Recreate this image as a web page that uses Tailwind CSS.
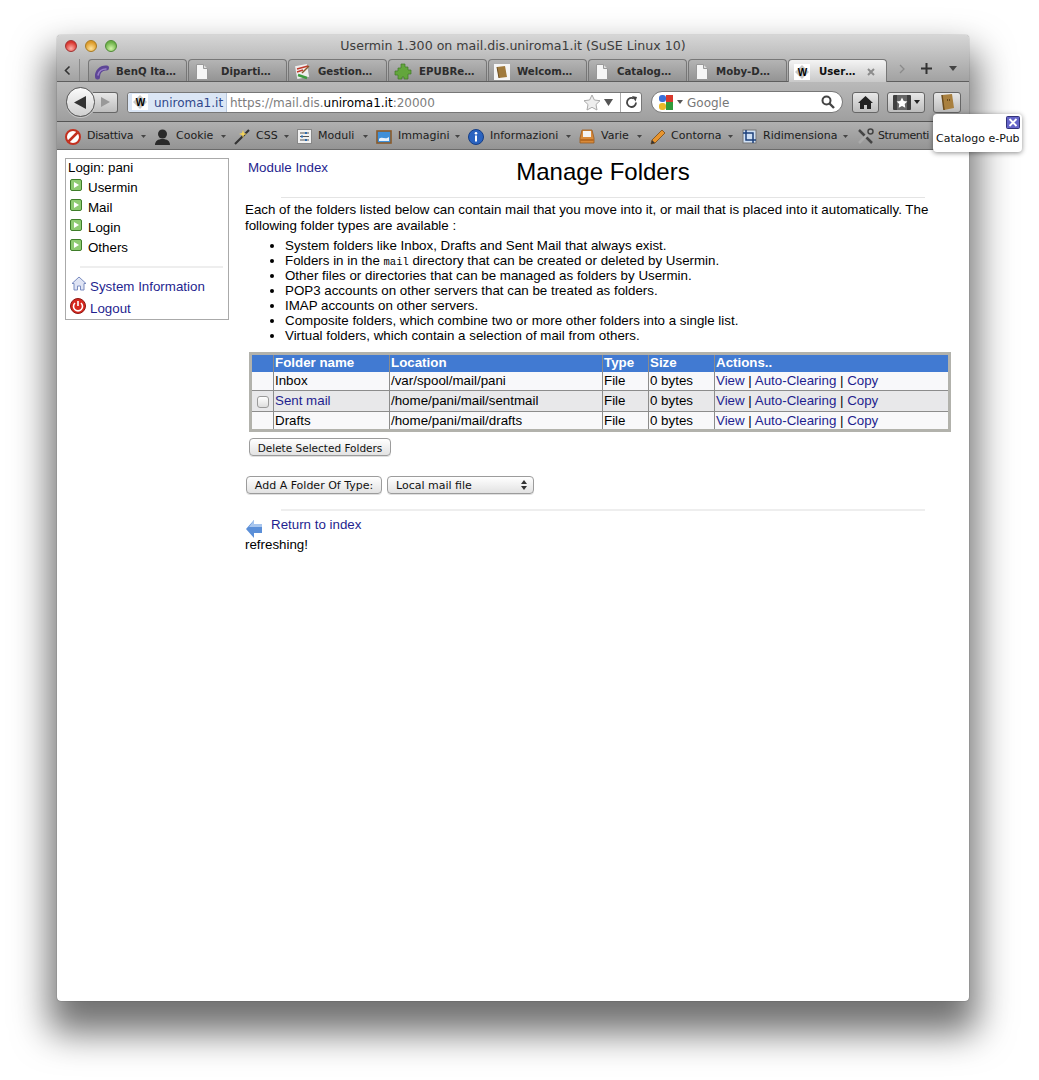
<!DOCTYPE html>
<html lang="en">
<head>
<meta charset="UTF-8" />
<title>Usermin 1.300 on mail.dis.uniroma1.it</title>
<script src="https://cdn.jsdelivr.net/npm/@tailwindcss/browser@4"></script>
</head>
<body class="bg-white w-[1039px] h-[1080px] overflow-hidden pl-[57px] pt-[35px] font-['Liberation_Sans',Arial,sans-serif]">

<!-- Browser window -->
<div class="relative w-[912px] h-[966px] rounded-[4px] bg-white flex flex-col shadow-[0_24px_36px_8px_rgba(0,0,0,0.56),0_0_1px_rgba(0,0,0,0.7)]">

  <!-- Title + tab strip -->
  <div class="h-[47px] shrink-0 rounded-t-[4px] bg-gradient-to-b from-[#d6d6d6] to-[#a2a2a2] border-b border-[#5e5e5e] flex flex-col font-['DejaVu_Sans',sans-serif]">
    <div class="relative h-[24px] shrink-0 flex items-start justify-center text-[12.600px] text-[#3c3c3c]">
      <div class="absolute left-[8px] top-[5px] flex gap-[8px]">
        <span class="w-[12px] h-[12px] rounded-full border border-[#a03030] bg-[radial-gradient(circle_at_50%_75%,#ffb0a8,#d8352e_70%)]"></span>
        <span class="w-[12px] h-[12px] rounded-full border border-[#a87a20] bg-[radial-gradient(circle_at_50%_75%,#ffe39a,#dc9a2a_70%)]"></span>
        <span class="w-[12px] h-[12px] rounded-full border border-[#4f8a35] bg-[radial-gradient(circle_at_50%_75%,#d2f5a8,#6cb048_70%)]"></span>
      </div>
      <span class="pt-[2px]">Usermin 1.300 on mail.dis.uniroma1.it (SuSE Linux 10)</span>
    </div>
    <div class="flex h-[22px] items-end text-[10.200px] font-bold text-[#2c2c2c]">
      <div class="w-[31px] h-[22px] shrink-0 flex items-center">
        <svg class="ml-[7px] mr-[8px]" width="7" height="11" viewBox="0 0 7 11"><path d="M5.500 1.500 1.500 5.500l4 4" fill="none" stroke="#333" stroke-width="1.600"/></svg>
        <span class="w-[1px] h-[22px] bg-[#8a8a8a]"></span>
      </div>
      <!-- tab: BenQ -->
      <div class="w-[99px] h-[22px] mr-[1px] pt-[2px] shrink-0 flex items-center rounded-t-[4px] border border-b-0 border-[#777] bg-gradient-to-b from-[#b4b4b4] to-[#949494]">
        <svg class="ml-[5px] mr-[6px]" width="16" height="16" viewBox="0 0 16 16"><path d="M3.500 13C3 8 7 3.500 12.500 4" fill="none" stroke="#5d4596" stroke-width="5" stroke-linecap="round"/><path d="M4 11C5 7 8 5 12 5" fill="none" stroke="#9a80c8" stroke-width="1.500" stroke-linecap="round"/></svg>
        <span>BenQ Ita…</span>
      </div>
      <!-- tab: Dipartimento -->
      <div class="w-[99px] h-[22px] mr-[1px] pt-[2px] shrink-0 flex items-center rounded-t-[4px] border border-b-0 border-[#777] bg-gradient-to-b from-[#b4b4b4] to-[#949494]">
        <svg class="ml-[7px] mr-[13px]" width="12" height="16" viewBox="0 0 12 16"><path d="M.5.5h7l4 4v11H.5z" fill="#f6f6f6" stroke="#999"/><path d="M7.500.5v4h4" fill="#ddd" stroke="#999"/></svg>
        <span>Diparti…</span>
      </div>
      <!-- tab: Gestione -->
      <div class="w-[99px] h-[22px] mr-[1px] pt-[2px] shrink-0 flex items-center rounded-t-[4px] border border-b-0 border-[#777] bg-gradient-to-b from-[#b4b4b4] to-[#949494]">
        <svg class="ml-[5px] mr-[7px]" width="17" height="17" viewBox="0 0 17 17"><rect x="2" y="2" width="12" height="13" fill="#eee" transform="rotate(-10 8 8)"/><path d="M3 6l11-3M3 9l6-2" stroke="#c0392b" stroke-width="1.500"/><path d="M4 12l9 3" stroke="#3f9b3f" stroke-width="2.500"/><path d="M8 10l7-7" stroke="#8a5a2a" stroke-width="1.500"/></svg>
        <span>Gestion…</span>
      </div>
      <!-- tab: EPUBReader -->
      <div class="w-[99px] h-[22px] mr-[1px] pt-[2px] shrink-0 flex items-center rounded-t-[4px] border border-b-0 border-[#777] bg-gradient-to-b from-[#b4b4b4] to-[#949494]">
        <svg class="ml-[5px] mr-[7px]" width="18" height="17" viewBox="0 0 18 17"><path d="M7 1h4v3h3v3h3v4h-3v5h-4v-2H8v2H4v-4H1V8h3V5h3z" fill="#63a63c" stroke="#3f7a25" stroke-width=".7"/></svg>
        <span>EPUBRe…</span>
      </div>
      <!-- tab: Welcome -->
      <div class="w-[99px] h-[22px] mr-[1px] pt-[2px] shrink-0 flex items-center rounded-t-[4px] border border-b-0 border-[#777] bg-gradient-to-b from-[#b4b4b4] to-[#949494]">
        <svg class="ml-[5px] mr-[7px]" width="16" height="16" viewBox="0 0 16 16"><rect width="16" height="16" fill="#f5f5f5"/><path d="M3 3l8-1 2 11-8 1z" fill="#a07a3c"/><path d="M3 3l2 11" stroke="#6a4c20"/></svg>
        <span>Welcom…</span>
      </div>
      <!-- tab: Catalogo -->
      <div class="w-[99px] h-[22px] mr-[1px] pt-[2px] shrink-0 flex items-center rounded-t-[4px] border border-b-0 border-[#777] bg-gradient-to-b from-[#b4b4b4] to-[#949494]">
        <svg class="ml-[7px] mr-[9px]" width="12" height="16" viewBox="0 0 12 16"><path d="M.5.5h7l4 4v11H.5z" fill="#f6f6f6" stroke="#999"/><path d="M7.500.5v4h4" fill="#ddd" stroke="#999"/></svg>
        <span>Catalog…</span>
      </div>
      <!-- tab: Moby-Dick -->
      <div class="w-[99px] h-[22px] mr-[1px] pt-[2px] shrink-0 flex items-center rounded-t-[4px] border border-b-0 border-[#777] bg-gradient-to-b from-[#b4b4b4] to-[#949494]">
        <svg class="ml-[7px] mr-[8px]" width="12" height="16" viewBox="0 0 12 16"><path d="M.5.5h7l4 4v11H.5z" fill="#f6f6f6" stroke="#999"/><path d="M7.500.5v4h4" fill="#ddd" stroke="#999"/></svg>
        <span>Moby-D…</span>
      </div>
      <!-- tab: active -->
      <div class="relative z-10 w-[99px] h-[23px] -mb-[1px] pt-[2px] shrink-0 flex items-center rounded-t-[4px] border border-b-0 border-[#777] bg-gradient-to-b from-[#f4f4f4] to-[#c9c9c9] text-[#111]">
        <span class="relative ml-[5px] mr-[9px] w-[16px] h-[16px] shrink-0 flex items-center justify-center bg-white text-[10px] font-bold tracking-[-1px] text-black font-['Liberation_Sans',sans-serif]">
          <svg class="absolute inset-0" width="16" height="16" viewBox="0 0 16 16"><path d="M8 1l7 7-7 7-7-7z" fill="#c8c8c8"/></svg>
          <span class="relative">W</span>
        </span>
        <span>User…</span>
        <svg class="ml-[12px]" width="8" height="8" viewBox="0 0 8 8"><path d="M1 1l6 6M7 1 1 7" stroke="#8c8c8c" stroke-width="2"/></svg>
      </div>
      <div class="flex-1 h-[22px] relative">
        <svg class="absolute left-[12px] top-[5px]" width="6" height="10" viewBox="0 0 6 10"><path d="M1 1l4 4-4 4" fill="none" stroke="#8a8a8a" stroke-width="1.300"/></svg>
        <svg class="absolute left-[34px] top-[4px]" width="11" height="11" viewBox="0 0 11 11"><path d="M5.500 0v11M0 5.500h11" stroke="#333" stroke-width="2"/></svg>
        <svg class="absolute left-[62px] top-[7px]" width="8" height="5" viewBox="0 0 8 5"><path d="M0 0h8L4 5z" fill="#444"/></svg>
      </div>
    </div>
  </div>

  <!-- Navigation toolbar -->
  <div class="relative h-[40px] shrink-0 bg-gradient-to-b from-[#b9b9b9] to-[#9f9f9f] border-b border-[#555] font-['DejaVu_Sans',sans-serif]">
    <div class="flex items-center h-full pl-[9px] pt-[1px]">
      <!-- back / forward -->
      <div class="relative z-10 w-[29px] h-[30px] shrink-0 rounded-full border border-[#555] bg-gradient-to-b from-[#fbfbfb] to-[#cfcfcf] flex items-center justify-center shadow-[0_1px_0_rgba(255,255,255,0.4)]">
        <svg width="13" height="13" viewBox="0 0 13 13"><path d="M12 0v13L0 6.500z" fill="#333"/></svg>
      </div>
      <div class="w-[25px] h-[21px] -ml-[2px] shrink-0 rounded-r-[3px] border border-[#666] border-l-0 bg-gradient-to-b from-[#e8e8e8] to-[#bdbdbd] flex items-center justify-center">
        <svg width="9" height="10" viewBox="0 0 9 10"><path d="M0 0v10l9-5z" fill="#999"/></svg>
      </div>
      <!-- url bar -->
      <div class="ml-[9px] w-[515px] h-[21px] shrink-0 flex items-center bg-white rounded-[3px] border border-[#777] text-[12px]">
        <div class="h-full w-[99px] flex items-center bg-[#dbe6f5] border-r border-[#b8c8de] rounded-l-[3px] text-[#30478a]">
          <span class="relative ml-[4px] mr-[6px] w-[16px] h-[16px] shrink-0 flex items-center justify-center bg-white text-[10px] font-bold tracking-[-1px] text-black font-['Liberation_Sans',sans-serif]">
            <svg class="absolute inset-0" width="16" height="16" viewBox="0 0 16 16"><path d="M8 1l7 7-7 7-7-7z" fill="#c8c8c8"/></svg>
            <span class="relative">W</span>
          </span>
          <span class="pt-[2px]">uniroma1.it</span>
        </div>
        <span class="ml-[3px] pt-[2px] text-[#7d7d7d]">https://mail.dis.<span class="text-black">uniroma1.it</span>:20000</span>
        <svg class="ml-auto" width="18" height="17" viewBox="0 0 18 17"><path d="M9 1l2.400 5 5.600.7-4 3.800 1 5.500L9 13.300 4 16l1-5.500L1 6.700 6.600 6z" fill="#eee" stroke="#aaa"/></svg>
        <svg class="ml-[3px] mr-[7px]" width="9" height="7" viewBox="0 0 9 7"><path d="M0 0h9L4.500 7z" fill="#555"/></svg>
        <div class="h-full w-[21px] border-l border-[#aaa] flex items-center justify-center">
          <svg width="13" height="13" viewBox="0 0 13 13"><path d="M11 6.500A4.500 4.500 0 1 1 8.800 2.600" fill="none" stroke="#444" stroke-width="1.800"/><path d="M7 0l5 1-1.500 4.500z" fill="#444"/></svg>
        </div>
      </div>
      <!-- search -->
      <div class="ml-[9px] w-[192px] h-[22px] shrink-0 flex items-center bg-white rounded-full border border-[#777] text-[12px] text-[#777]">
        <svg class="ml-[6px]" width="17" height="17" viewBox="0 0 17 17"><rect x="1" y="1" width="7" height="7" rx="3" fill="#3a6fd8"/><rect x="8" y="1" width="7" height="7" fill="#d8382c"/><rect x="8" y="8" width="7" height="8" fill="#2f9a3a"/><rect x="1" y="9" width="7" height="7" rx="3" fill="#eab92a"/></svg>
        <svg class="ml-[2px] mr-[4px]" width="6" height="4" viewBox="0 0 6 4"><path d="M0 0h6L3 4z" fill="#555"/></svg>
        <span class="pt-[2px]">Google</span>
        <svg class="ml-auto mr-[7px]" width="14" height="14" viewBox="0 0 14 14"><circle cx="5.500" cy="5.500" r="4" fill="none" stroke="#444" stroke-width="2"/><path d="M8.500 8.500 13 13" stroke="#444" stroke-width="2.400"/></svg>
      </div>
      <!-- right buttons -->
      <div class="ml-[9px] w-[27px] h-[21px] shrink-0 flex items-center justify-center rounded-[3px] border border-[#666] bg-gradient-to-b from-[#e8e8e8] to-[#bdbdbd]">
        <svg width="15" height="13" viewBox="0 0 15 13"><path d="M7.500 0 15 7h-2v6H9V9H6v4H2V7H0z" fill="#222"/></svg>
      </div>
      <div class="ml-[8px] w-[38px] h-[21px] shrink-0 flex items-center justify-center gap-[3px] rounded-[3px] border border-[#666] bg-gradient-to-b from-[#e8e8e8] to-[#bdbdbd]">
        <svg width="18" height="15" viewBox="0 0 18 15"><rect width="18" height="15" rx="1" fill="#3e3e3e"/><rect x="4" width="10" height="15" fill="#666"/><path d="M9 2.500l1.700 3.400 3.700.5-2.700 2.600.6 3.700L9 11l-3.300 1.700.6-3.700-2.700-2.600 3.700-.5z" fill="#fff"/></svg>
        <svg width="6" height="4" viewBox="0 0 6 4"><path d="M0 0h6L3 4z" fill="#222"/></svg>
      </div>
      <div class="ml-[8px] w-[28px] h-[21px] shrink-0 flex items-center justify-center rounded-[3px] border border-[#666] bg-gradient-to-b from-[#e8e8e8] to-[#bdbdbd]">
        <svg width="14" height="16" viewBox="0 0 14 16"><path d="M2 1l10-1 2 14-10 2z" fill="#a9803f"/><path d="M2 1l2 15" stroke="#6b4b1c" stroke-width="1.500"/><path d="M7 5h1v2H7zm2 0h1v2H9z" fill="#6b4b1c"/></svg>
      </div>
    </div>
  </div>

  <!-- Bookmarks toolbar -->
  <div class="h-[28px] shrink-0 bg-gradient-to-b from-[#b0b0b0] to-[#949494] border-b border-[#6a6a6a] flex items-center pl-[8px] pt-[2px] text-[11px] text-[#1c1c1c] font-['DejaVu_Sans',sans-serif] whitespace-nowrap">
    <svg class="mr-[6px] shrink-0" width="16" height="16" viewBox="0 0 16 16"><circle cx="8" cy="8" r="7" fill="#fff" stroke="#c3301f" stroke-width="2"/><path d="M3.500 12.500l9-9" stroke="#c3301f" stroke-width="2.500"/></svg>
    <span class="w-[46px] shrink-0 tracking-[-0.3px]">Disattiva</span>
    <svg class="ml-[8px] mr-[8px] shrink-0" width="5" height="3" viewBox="0 0 5 3"><path d="M0 0h5L2.500 3z" fill="#444"/></svg>
    <svg class="mr-[5px] shrink-0" width="17" height="16" viewBox="0 0 17 16"><circle cx="8.500" cy="5" r="4.500" fill="#2a2a2a"/><path d="M1 16c0-4 3-6 7.500-6s7.500 2 7.500 6z" fill="#2a2a2a"/></svg>
    <span class="w-[37px] shrink-0">Cookie</span>
    <svg class="ml-[8px] mr-[8px] shrink-0" width="5" height="3" viewBox="0 0 5 3"><path d="M0 0h5L2.500 3z" fill="#444"/></svg>
    <svg class="mr-[5px] shrink-0" width="17" height="17" viewBox="0 0 17 17"><path d="M1 16 15 2" stroke="#333" stroke-width="2.200"/><path d="M8 5l1-3 1 3 3 1-3 1-1 3-1-3-3-1z" fill="#f3d35a"/></svg>
    <span class="w-[20px] shrink-0">CSS</span>
    <svg class="ml-[8px] mr-[8px] shrink-0" width="5" height="3" viewBox="0 0 5 3"><path d="M0 0h5L2.500 3z" fill="#444"/></svg>
    <svg class="mr-[6px] shrink-0" width="15" height="15" viewBox="0 0 15 15"><rect x=".5" y=".5" width="14" height="14" fill="#f2f2f2" stroke="#888"/><path d="M3 4h9M3 7.500h9M3 11h9" stroke="#555"/><path d="M9 3v2M5 6.500v2M9 10v2" stroke="#2d6cb0" stroke-width="2"/></svg>
    <span class="w-[37px] shrink-0">Moduli</span>
    <svg class="ml-[8px] mr-[8px] shrink-0" width="5" height="3" viewBox="0 0 5 3"><path d="M0 0h5L2.500 3z" fill="#444"/></svg>
    <svg class="mr-[6px] shrink-0" width="16" height="14" viewBox="0 0 16 14"><rect x="1" y="1" width="14" height="12" fill="#3f8fd8" stroke="#8a5a2a" stroke-width="1.600"/><path d="M3 9c3-3 6 1 10-2v4H3z" fill="#e8f2fb"/></svg>
    <span class="w-[49px] shrink-0">Immagini</span>
    <svg class="ml-[8px] mr-[8px] shrink-0" width="5" height="3" viewBox="0 0 5 3"><path d="M0 0h5L2.500 3z" fill="#444"/></svg>
    <svg class="mr-[6px] shrink-0" width="16" height="16" viewBox="0 0 16 16"><circle cx="8" cy="8" r="7.500" fill="#2a63c0" stroke="#173f86"/><circle cx="8" cy="4.300" r="1.300" fill="#fff"/><rect x="7" y="6.500" width="2" height="6" fill="#fff"/></svg>
    <span class="w-[68px] shrink-0">Informazioni</span>
    <svg class="ml-[8px] mr-[8px] shrink-0" width="5" height="3" viewBox="0 0 5 3"><path d="M0 0h5L2.500 3z" fill="#444"/></svg>
    <svg class="mr-[6px] shrink-0" width="16" height="15" viewBox="0 0 16 15"><path d="M3 1h10l2 8v5H1V9z" fill="#d88a3a" stroke="#9a5a20" stroke-width=".8"/><rect x="4" y="2" width="8" height="6" fill="#f3f3f3"/><rect x="1" y="10" width="14" height="2" fill="#b86a20"/></svg>
    <span class="w-[28px] shrink-0">Varie</span>
    <svg class="ml-[8px] mr-[8px] shrink-0" width="5" height="3" viewBox="0 0 5 3"><path d="M0 0h5L2.500 3z" fill="#444"/></svg>
    <svg class="mr-[5px] shrink-0" width="16" height="16" viewBox="0 0 16 16"><path d="M1 15l1-4L12 1l3 3L5 14z" fill="#e8952f" stroke="#7a4a14" stroke-width=".8"/><path d="M1 15l1-4 3 3z" fill="#333"/></svg>
    <span class="w-[49px] shrink-0">Contorna</span>
    <svg class="ml-[8px] mr-[9px] shrink-0" width="5" height="3" viewBox="0 0 5 3"><path d="M0 0h5L2.500 3z" fill="#444"/></svg>
    <svg class="mr-[6px] shrink-0" width="15" height="15" viewBox="0 0 15 15"><rect x="1" y="1" width="13" height="13" fill="#cfe0f5" stroke="#777"/><path d="M4 1v10h10M1 4h10v10" fill="none" stroke="#1d3f7a" stroke-width="1.500"/></svg>
    <span class="w-[72px] shrink-0">Ridimensiona</span>
    <svg class="ml-[8px] mr-[9px] shrink-0" width="5" height="3" viewBox="0 0 5 3"><path d="M0 0h5L2.500 3z" fill="#444"/></svg>
    <svg class="mr-[4px] shrink-0" width="17" height="17" viewBox="0 0 17 17"><path d="M2 2l13 13" stroke="#444" stroke-width="2.500"/><path d="M15 2 2 15" stroke="#aaa" stroke-width="2.500"/><circle cx="13.500" cy="3.500" r="2.500" fill="none" stroke="#444" stroke-width="1.500"/></svg>
    <span class="tracking-[-0.4px]">Strumenti</span>
  </div>

  <!-- Page content -->
  <div class="flex-1 flex items-start pl-[8px] pt-[8px] text-[13.330px] leading-[15px] text-black">

    <!-- Left menu -->
    <div class="w-[164px] h-[162px] shrink-0 border border-[#aaa] pl-[2px]">
      <div class="pt-[1px] h-[18px]">Login: pani</div>
      <div class="flex flex-col">
        <div class="h-[20px] flex items-center"><svg class="ml-[2px] mr-[6px] -mt-[4px]" width="12" height="12" viewBox="0 0 12 12"><rect x=".5" y=".5" width="11" height="11" rx="1.500" fill="#8ecb72" stroke="#3e7d2a"/><path d="M4 3v6l5-3z" fill="#fff"/></svg>Usermin</div>
        <div class="h-[20px] flex items-center"><svg class="ml-[2px] mr-[6px] -mt-[4px]" width="12" height="12" viewBox="0 0 12 12"><rect x=".5" y=".5" width="11" height="11" rx="1.500" fill="#8ecb72" stroke="#3e7d2a"/><path d="M4 3v6l5-3z" fill="#fff"/></svg>Mail</div>
        <div class="h-[20px] flex items-center"><svg class="ml-[2px] mr-[6px] -mt-[4px]" width="12" height="12" viewBox="0 0 12 12"><rect x=".5" y=".5" width="11" height="11" rx="1.500" fill="#8ecb72" stroke="#3e7d2a"/><path d="M4 3v6l5-3z" fill="#fff"/></svg>Login</div>
        <div class="h-[20px] flex items-center"><svg class="ml-[2px] mr-[6px] -mt-[4px]" width="12" height="12" viewBox="0 0 12 12"><rect x=".5" y=".5" width="11" height="11" rx="1.500" fill="#8ecb72" stroke="#3e7d2a"/><path d="M4 3v6l5-3z" fill="#fff"/></svg>Others</div>
      </div>
      <div class="h-[2px] ml-[12px] mr-[5px] mt-[9px] bg-[#eeeeee]"></div>
      <div class="h-[22px] mt-[7px] flex items-center text-[#1f1f8f]"><svg class="ml-[3px] mr-[3px] -mt-[5px]" width="16" height="15" viewBox="0 0 16 15"><path d="M8 1 1 7.500h2V14h3.500v-4h3v4H13V7.500h2z" fill="#dfe4f4" stroke="#7a8cc0"/></svg>System Information</div>
      <div class="h-[22px] flex items-center text-[#1f1f8f]"><svg class="ml-[2px] mr-[4px] -mt-[5px]" width="16" height="16" viewBox="0 0 16 16"><circle cx="8" cy="8" r="7.500" fill="#d6281f" stroke="#8e1712"/><path d="M5 5a4.500 4.500 0 1 0 6 0" fill="none" stroke="#fff" stroke-width="1.600"/><path d="M8 3v5" stroke="#fff" stroke-width="1.600"/></svg>Logout</div>
    </div>

    <!-- Main column -->
    <div class="ml-[16px] w-[708px] shrink-0">
      <div class="relative h-[40px] flex justify-center">
        <a class="absolute left-[3px] top-[2px] text-[#1f1f8f]">Module Index</a>
        <h1 class="text-[24px] leading-[28px] text-black pl-[8px]">Manage Folders</h1>
      </div>
      <div class="h-[1px] mt-[-1px] ml-[36px] mr-[28px] bg-[#e4e4e4]"></div>
      <p class="mt-[4px] leading-[16px] w-[700px]">Each of the folders listed below can contain mail that you move into it, or mail that is placed into it automatically. The following folder types are available :</p>
      <ul class="mt-[4px] pl-[40px] list-disc">
        <li>System folders like Inbox, Drafts and Sent Mail that always exist.</li>
        <li>Folders in in the <code class="font-['Liberation_Mono',monospace] text-[10.500px] leading-[0]">mail</code> directory that can be created or deleted by Usermin.</li>
        <li>Other files or directories that can be managed as folders by Usermin.</li>
        <li>POP3 accounts on other servers that can be treated as folders.</li>
        <li>IMAP accounts on other servers.</li>
        <li>Composite folders, which combine two or more other folders into a single list.</li>
        <li>Virtual folders, which contain a selection of mail from others.</li>
      </ul>

      <!-- Folder table -->
      <table class="mt-[9px] ml-[4px] w-[702px] table-fixed border-collapse border-[3px] border-[#b2b2ac]">
        <colgroup><col class="w-[23px]" /><col class="w-[116px]" /><col class="w-[213px]" /><col class="w-[46px]" /><col class="w-[66px]" /><col /></colgroup>
        <thead>
          <tr class="h-[18px] bg-[#417ad2] text-white font-bold text-left">
            <th class="p-0 border-r border-[#8c8c8c]"></th>
            <th class="p-0 pl-[1px] border-r border-[#8c8c8c]"><span class="relative -top-[1px]">Folder name</span></th>
            <th class="p-0 pl-[1px] border-r border-[#8c8c8c]"><span class="relative -top-[1px]">Location</span></th>
            <th class="p-0 pl-[1px] border-r border-[#8c8c8c]"><span class="relative -top-[1px]">Type</span></th>
            <th class="p-0 pl-[1px] border-r border-[#8c8c8c]"><span class="relative -top-[1px]">Size</span></th>
            <th class="p-0 pl-[1px]"><span class="relative -top-[1px]">Actions..</span></th>
          </tr>
        </thead>
        <tbody>
          <tr class="h-[19px] bg-[#f8f8fa] border-b border-[#8c8c8c]">
            <td class="p-0 border-r border-[#8c8c8c]"></td>
            <td class="p-0 pl-[1px] border-r border-[#8c8c8c]">Inbox</td>
            <td class="p-0 pl-[1px] border-r border-[#8c8c8c]">/var/spool/mail/pani</td>
            <td class="p-0 pl-[1px] border-r border-[#8c8c8c]">File</td>
            <td class="p-0 pl-[1px] border-r border-[#8c8c8c]">0 bytes</td>
            <td class="p-0 pl-[1px]"><a class="text-[#1f1f8f]">View</a> | <a class="text-[#1f1f8f]">Auto-Clearing</a> | <a class="text-[#1f1f8f]">Copy</a></td>
          </tr>
          <tr class="h-[21px] bg-[#e8e8ea] border-b border-[#8c8c8c]">
            <td class="p-0 border-r border-[#8c8c8c]"><span class="block w-[12px] h-[12px] ml-[5px] mt-[2px] rounded-[3px] border border-[#9a9a9a] bg-gradient-to-b from-[#ffffff] to-[#dedede]"></span></td>
            <td class="p-0 pl-[1px] border-r border-[#8c8c8c]"><a class="relative -top-[1px] text-[#1f1f8f]">Sent mail</a></td>
            <td class="p-0 pl-[1px] border-r border-[#8c8c8c]"><span class="relative -top-[1px]">/home/pani/mail/sentmail</span></td>
            <td class="p-0 pl-[1px] border-r border-[#8c8c8c]"><span class="relative -top-[1px]">File</span></td>
            <td class="p-0 pl-[1px] border-r border-[#8c8c8c]"><span class="relative -top-[1px]">0 bytes</span></td>
            <td class="p-0 pl-[1px]"><span class="relative -top-[1px]"><a class="text-[#1f1f8f]">View</a> | <a class="text-[#1f1f8f]">Auto-Clearing</a> | <a class="text-[#1f1f8f]">Copy</a></span></td>
          </tr>
          <tr class="h-[19px] bg-[#f8f8fa]">
            <td class="p-0 border-r border-[#8c8c8c]"></td>
            <td class="p-0 pl-[1px] border-r border-[#8c8c8c]">Drafts</td>
            <td class="p-0 pl-[1px] border-r border-[#8c8c8c]">/home/pani/mail/drafts</td>
            <td class="p-0 pl-[1px] border-r border-[#8c8c8c]">File</td>
            <td class="p-0 pl-[1px] border-r border-[#8c8c8c]">0 bytes</td>
            <td class="p-0 pl-[1px]"><a class="text-[#1f1f8f]">View</a> | <a class="text-[#1f1f8f]">Auto-Clearing</a> | <a class="text-[#1f1f8f]">Copy</a></td>
          </tr>
        </tbody>
      </table>

      <button class="block mt-[6px] ml-[4px] w-[142px] h-[18px] pt-[1px] rounded-[4px] border border-[#9c9c9c] bg-gradient-to-b from-[#ffffff] to-[#e2e2e2] text-[10.500px] leading-[14px] text-[#111] font-['DejaVu_Sans',sans-serif] shadow-[0_1px_0_rgba(0,0,0,0.12)]">Delete Selected Folders</button>

      <div class="mt-[20px] flex items-center gap-[5px] ml-[1px] font-['DejaVu_Sans',sans-serif] text-[11px] text-[#111]">
        <button class="w-[136px] h-[18px] pt-[1px] rounded-[4px] border border-[#9c9c9c] bg-gradient-to-b from-[#ffffff] to-[#e2e2e2] leading-[14px] shadow-[0_1px_0_rgba(0,0,0,0.12)]">Add A Folder Of Type:</button>
        <div class="w-[147px] h-[18px] flex items-center pl-[8px] rounded-[4px] border border-[#9c9c9c] bg-gradient-to-b from-[#ffffff] to-[#e2e2e2] shadow-[0_1px_0_rgba(0,0,0,0.12)]">
          <span>Local mail file</span>
          <svg class="ml-auto mr-[6px]" width="6" height="10" viewBox="0 0 6 10"><path d="M3 0l3 4H0zM3 10 0 6h6z" fill="#333"/></svg>
        </div>
      </div>

      <div class="h-[2px] mt-[15px] ml-[36px] mr-[28px] bg-[#eeeeee]"></div>
      <div class="mt-[6px] h-[20px] flex items-start">
        <svg class="mt-[3px] mr-[9px] ml-[1px] shrink-0" width="16" height="18" viewBox="0 0 16 18"><path d="M8 0v4h8v9H8v5L0 9z" fill="#5b8fd8"/><path d="M8 0v4h8v3H3z" fill="#a8c6ee"/></svg>
        <a class="text-[#1f1f8f]">Return to index</a>
      </div>
      <div>refreshing!</div>
    </div>
  </div>

  <!-- Bookmark tooltip panel -->
  <div class="absolute left-[876px] top-[79px] w-[89px] h-[38px] rounded-[4px] bg-white shadow-[0_1px_5px_rgba(0,0,0,0.45)] font-['DejaVu_Sans',sans-serif] text-[11px] text-[#111] z-20">
    <svg class="absolute right-[2px] top-[2px]" width="14" height="13" viewBox="0 0 14 13"><rect x=".5" y=".5" width="13" height="12" rx="1" fill="#6464c8" stroke="#32327a"/><path d="M3.500 3l7 7m0-7-7 7" stroke="#fff" stroke-width="1.800"/></svg>
    <span class="absolute left-[3px] top-[17px] whitespace-nowrap">Catalogo e-Pub</span>
  </div>
</div>
</body>
</html>
